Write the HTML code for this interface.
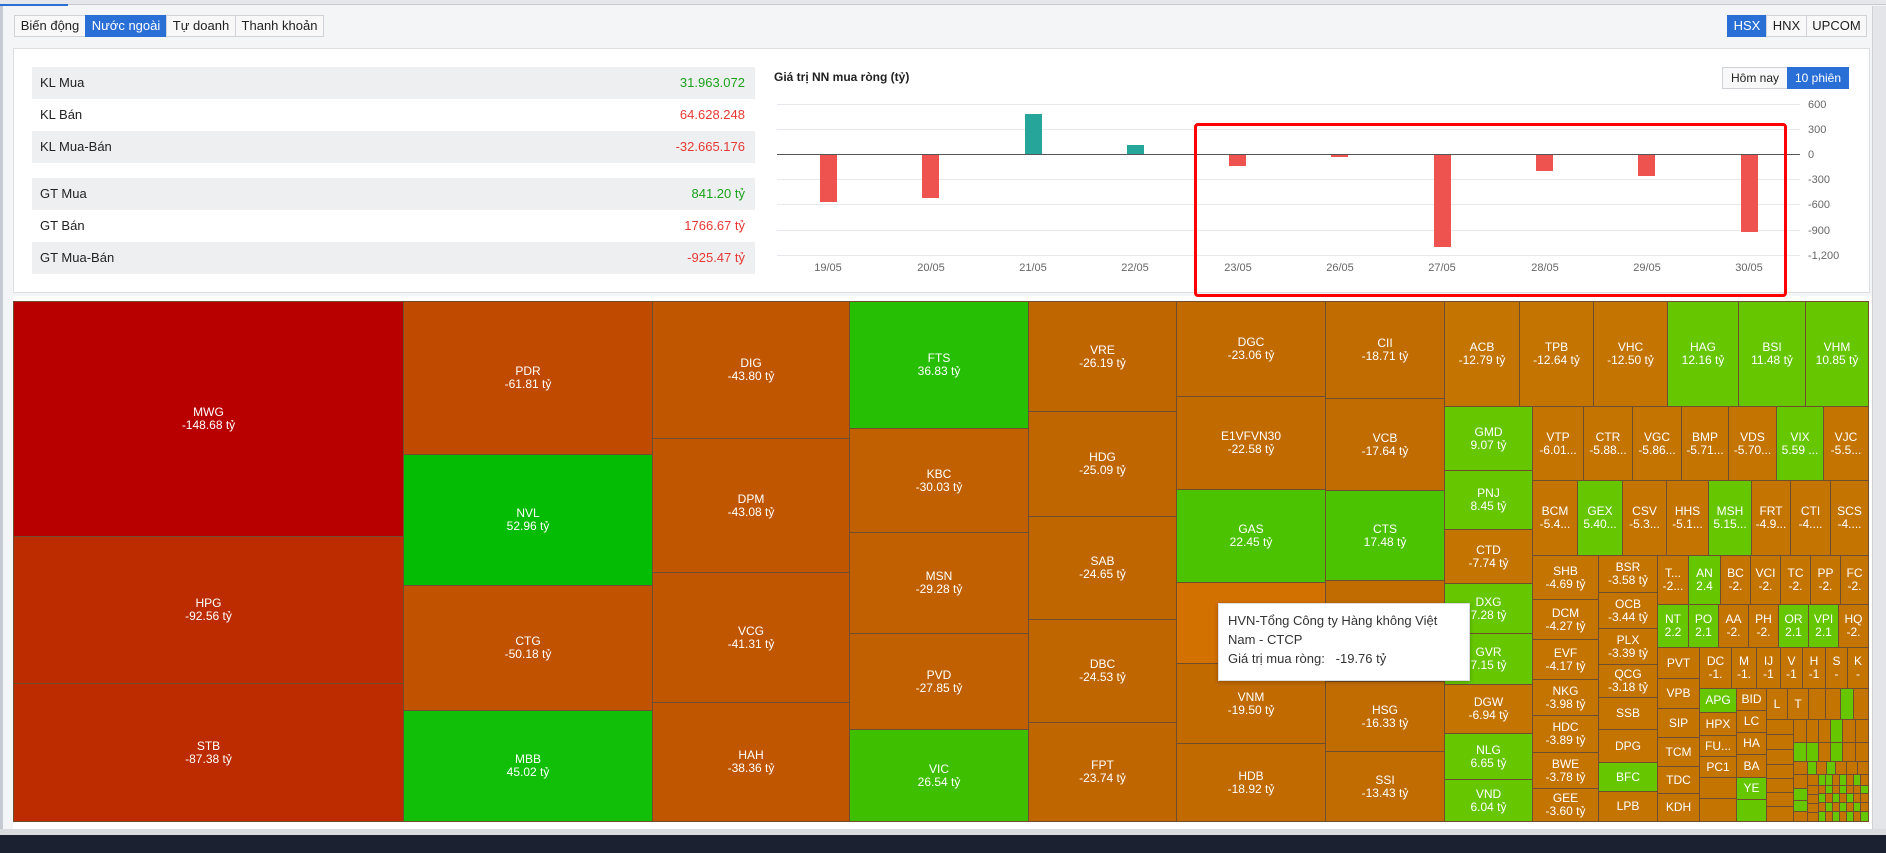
<!DOCTYPE html>
<html><head><meta charset="utf-8"><style>
*{margin:0;padding:0;box-sizing:border-box}
body{width:1886px;height:853px;overflow:hidden;background:#f4f5f7;font-family:"Liberation Sans",sans-serif;position:relative}
.a{position:absolute}
.tab{position:absolute;top:15px;height:22px;border:1px solid #cfd2d6;background:#f8f8f8;font-size:13px;line-height:20px;text-align:center;color:#222}
.on{background:#2a6fd6;color:#fff;border-color:#2a6fd6}
.row{position:absolute;left:32px;width:723px;height:32px;font-size:13px;line-height:32px;color:#222;padding:0 10px 0 8px}
.row b{font-weight:normal;float:right}
.g{color:#1aa31a}.r{color:#e53935}
.gr{background:#eeeff1}
.c{position:absolute;border:1px solid #6e4e2c;color:#fff;font-size:12px;line-height:13px;text-align:center;display:flex;flex-direction:column;justify-content:center;overflow:hidden;white-space:nowrap}
.o{background:#c47400}.gn{background:#66c600}
</style></head><body>
<div class="a" style="left:0;top:0;width:1886px;height:5px;background:#e6e7ea;border-bottom:1px solid #c8cacd"></div>
<div class="a" style="left:0;top:4px;width:68px;height:2px;background:#2a6fd6"></div>
<div class="a" style="left:0;top:6px;width:3px;height:830px;background:#c5cad3"></div>
<div class="a" style="left:1872px;top:6px;width:14px;height:830px;background:#e4e5e8;border-left:1px solid #cfd1d5"></div>

<div class="tab" style="left:14px;width:72px">Biến động</div>
<div class="tab on" style="left:85px;width:82px">Nước ngoài</div>
<div class="tab" style="left:166px;width:70px">Tự doanh</div>
<div class="tab" style="left:235px;width:89px">Thanh khoản</div>
<div class="tab on" style="left:1727px;width:40px">HSX</div>
<div class="tab" style="left:1766px;width:41px">HNX</div>
<div class="tab" style="left:1806px;width:61px">UPCOM</div>

<div class="a" style="left:13px;top:48px;width:1857px;height:245px;background:#fff;border:1px solid #dcdee2"></div>
<div class="row gr" style="top:67px">KL Mua<b class="g">31.963.072</b></div>
<div class="row" style="top:99px">KL Bán<b class="r">64.628.248</b></div>
<div class="row gr" style="top:131px">KL Mua-Bán<b class="r">-32.665.176</b></div>
<div class="row gr" style="top:178px">GT Mua<b class="g">841.20 tỷ</b></div>
<div class="row" style="top:210px">GT Bán<b class="r">1766.67 tỷ</b></div>
<div class="row gr" style="top:242px">GT Mua-Bán<b class="r">-925.47 tỷ</b></div>
<div class="a" style="left:774px;top:70px;font-size:12px;font-weight:bold;color:#222">Giá trị NN mua ròng (tỷ)</div>
<div class="tab" style="left:1722px;top:67px;height:22px;width:66px;font-size:12px">Hôm nay</div>
<div class="tab on" style="left:1787px;top:67px;height:22px;width:62px;font-size:12px">10 phiên</div>

<svg class="a" style="left:0;top:0" width="1886" height="300" font-family="Liberation Sans" font-size="11" fill="#666">
<g stroke="#e6e9ee" stroke-width="1"><line x1="777" y1="104.5" x2="1800" y2="104.5"/><line x1="777" y1="129.5" x2="1800" y2="129.5"/><line x1="777" y1="179.5" x2="1800" y2="179.5"/><line x1="777" y1="204.5" x2="1800" y2="204.5"/><line x1="777" y1="230.5" x2="1800" y2="230.5"/><line x1="777" y1="255.5" x2="1800" y2="255.5"/></g>
<g fill="#ef5350"><rect x="820" y="154" width="17" height="48"/><rect x="922" y="154" width="17" height="44"/><rect x="1229" y="154" width="17" height="12"/><rect x="1331" y="154" width="17" height="3"/><rect x="1434" y="154" width="17" height="93"/><rect x="1536" y="154" width="17" height="17"/><rect x="1638" y="154" width="17" height="22"/><rect x="1741" y="154" width="17" height="78"/></g>
<g fill="#26a69a"><rect x="1025" y="114" width="17" height="40"/><rect x="1127" y="145" width="17" height="9"/></g>
<line x1="777" y1="154.5" x2="1800" y2="154.5" stroke="#555"/>
<g><text x="1808" y="108">600</text><text x="1808" y="133">300</text><text x="1808" y="158">0</text><text x="1808" y="183">-300</text><text x="1808" y="208">-600</text><text x="1808" y="234">-900</text><text x="1808" y="259">-1,200</text></g>
<g text-anchor="middle"><text x="828" y="271">19/05</text><text x="931" y="271">20/05</text><text x="1033" y="271">21/05</text><text x="1135" y="271">22/05</text><text x="1238" y="271">23/05</text><text x="1340" y="271">26/05</text><text x="1442" y="271">27/05</text><text x="1545" y="271">28/05</text><text x="1647" y="271">29/05</text><text x="1749" y="271">30/05</text></g>
</svg>

<div class="a" style="left:13px;top:296px;width:1859px;height:533px;background:#fff"></div>
<div class="a" style="left:0;top:829px;width:1886px;height:6px;background:#d9dbdf"></div>
<div class="a" style="left:0;top:835px;width:1886px;height:18px;background:#1b2130"></div>

<div class="c" style="left:13px;top:301px;width:391px;height:236px;background:#b80000">MWG<br>-148.68 tỷ</div>
<div class="c" style="left:13px;top:536px;width:391px;height:148px;background:#bc2c00">HPG<br>-92.56 tỷ</div>
<div class="c" style="left:13px;top:683px;width:391px;height:139px;background:#bc2c00">STB<br>-87.38 tỷ</div>
<div class="c" style="left:403px;top:301px;width:250px;height:154px;background:#c04a00">PDR<br>-61.81 tỷ</div>
<div class="c" style="left:403px;top:454px;width:250px;height:132px;background:#04bc04">NVL<br>52.96 tỷ</div>
<div class="c" style="left:403px;top:585px;width:250px;height:126px;background:#c05200">CTG<br>-50.18 tỷ</div>
<div class="c" style="left:403px;top:710px;width:250px;height:112px;background:#12bf08">MBB<br>45.02 tỷ</div>
<div class="c" style="left:652px;top:301px;width:198px;height:138px;background:#c05600">DIG<br>-43.80 tỷ</div>
<div class="c" style="left:652px;top:438px;width:198px;height:135px;background:#c05600">DPM<br>-43.08 tỷ</div>
<div class="c" style="left:652px;top:572px;width:198px;height:131px;background:#c05600">VCG<br>-41.31 tỷ</div>
<div class="c" style="left:652px;top:702px;width:198px;height:120px;background:#c05600">HAH<br>-38.36 tỷ</div>
<div class="c" style="left:849px;top:301px;width:180px;height:128px;background:#27bf04">FTS<br>36.83 tỷ</div>
<div class="c" style="left:849px;top:428px;width:180px;height:105px;background:#c06000">KBC<br>-30.03 tỷ</div>
<div class="c" style="left:849px;top:532px;width:180px;height:102px;background:#c06000">MSN<br>-29.28 tỷ</div>
<div class="c" style="left:849px;top:633px;width:180px;height:97px;background:#c06000">PVD<br>-27.85 tỷ</div>
<div class="c" style="left:849px;top:729px;width:180px;height:93px;background:#3ec000">VIC<br>26.54 tỷ</div>
<div class="c" style="left:1028px;top:301px;width:149px;height:111px;background:#c06600">VRE<br>-26.19 tỷ</div>
<div class="c" style="left:1028px;top:411px;width:149px;height:106px;background:#c06600">HDG<br>-25.09 tỷ</div>
<div class="c" style="left:1028px;top:516px;width:149px;height:104px;background:#c06600">SAB<br>-24.65 tỷ</div>
<div class="c" style="left:1028px;top:619px;width:149px;height:104px;background:#c06600">DBC<br>-24.53 tỷ</div>
<div class="c" style="left:1028px;top:722px;width:149px;height:100px;background:#c06600">FPT<br>-23.74 tỷ</div>
<div class="c" style="left:1176px;top:301px;width:150px;height:96px;background:#c06a00">DGC<br>-23.06 tỷ</div>
<div class="c" style="left:1176px;top:396px;width:150px;height:94px;background:#c06a00">E1VFVN30<br>-22.58 tỷ</div>
<div class="c" style="left:1176px;top:489px;width:150px;height:94px;background:#4cc300">GAS<br>22.45 tỷ</div>
<div class="c" style="left:1176px;top:582px;width:150px;height:82px;background:#d27000"></div>
<div class="c" style="left:1176px;top:663px;width:150px;height:81px;background:#c06a00">VNM<br>-19.50 tỷ</div>
<div class="c" style="left:1176px;top:743px;width:150px;height:79px;background:#c06a00">HDB<br>-18.92 tỷ</div>
<div class="c" style="left:1325px;top:301px;width:120px;height:98px;background:#c06c00">CII<br>-18.71 tỷ</div>
<div class="c" style="left:1325px;top:398px;width:120px;height:93px;background:#c06c00">VCB<br>-17.64 tỷ</div>
<div class="c" style="left:1325px;top:490px;width:120px;height:91px;background:#4cc300">CTS<br>17.48 tỷ</div>
<div class="c" style="left:1325px;top:580px;width:120px;height:102px;background:#c06c00"></div>
<div class="c" style="left:1325px;top:681px;width:120px;height:71px;background:#c06c00">HSG<br>-16.33 tỷ</div>
<div class="c" style="left:1325px;top:751px;width:120px;height:71px;background:#c06c00">SSI<br>-13.43 tỷ</div>

<div class="c o" style="left:1444px;top:301px;width:76px;height:106px">ACB<br>-12.79 tỷ</div>
<div class="c o" style="left:1519px;top:301px;width:75px;height:106px">TPB<br>-12.64 tỷ</div>
<div class="c o" style="left:1593px;top:301px;width:75px;height:106px">VHC<br>-12.50 tỷ</div>
<div class="c gn" style="left:1667px;top:301px;width:72px;height:106px">HAG<br>12.16 tỷ</div>
<div class="c gn" style="left:1738px;top:301px;width:68px;height:106px">BSI<br>11.48 tỷ</div>
<div class="c gn" style="left:1805px;top:301px;width:64px;height:106px">VHM<br>10.85 tỷ</div>
<div class="c gn" style="left:1444px;top:406px;width:89px;height:65px">GMD<br>9.07 tỷ</div>
<div class="c gn" style="left:1444px;top:470px;width:89px;height:60px">PNJ<br>8.45 tỷ</div>
<div class="c o" style="left:1444px;top:529px;width:89px;height:55px">CTD<br>-7.74 tỷ</div>
<div class="c gn" style="left:1444px;top:583px;width:89px;height:51px">DXG<br>7.28 tỷ</div>
<div class="c gn" style="left:1444px;top:633px;width:89px;height:52px">GVR<br>7.15 tỷ</div>
<div class="c o" style="left:1444px;top:684px;width:89px;height:50px">DGW<br>-6.94 tỷ</div>
<div class="c gn" style="left:1444px;top:733px;width:89px;height:47px">NLG<br>6.65 tỷ</div>
<div class="c gn" style="left:1444px;top:779px;width:89px;height:43px">VND<br>6.04 tỷ</div>
<div class="c o" style="left:1532px;top:406px;width:52px;height:75px">VTP<br>-6.01...</div>
<div class="c o" style="left:1583px;top:406px;width:50px;height:75px">CTR<br>-5.88...</div>
<div class="c o" style="left:1632px;top:406px;width:50px;height:75px">VGC<br>-5.86...</div>
<div class="c o" style="left:1681px;top:406px;width:48px;height:75px">BMP<br>-5.71...</div>
<div class="c o" style="left:1728px;top:406px;width:49px;height:75px">VDS<br>-5.70...</div>
<div class="c gn" style="left:1776px;top:406px;width:48px;height:75px">VIX<br>5.59 ...</div>
<div class="c o" style="left:1823px;top:406px;width:46px;height:75px">VJC<br>-5.5...</div>
<div class="c o" style="left:1532px;top:480px;width:46px;height:76px">BCM<br>-5.4...</div>
<div class="c gn" style="left:1577px;top:480px;width:46px;height:76px">GEX<br>5.40...</div>
<div class="c o" style="left:1622px;top:480px;width:45px;height:76px">CSV<br>-5.3...</div>
<div class="c o" style="left:1666px;top:480px;width:43px;height:76px">HHS<br>-5.1...</div>
<div class="c gn" style="left:1708px;top:480px;width:44px;height:76px">MSH<br>5.15...</div>
<div class="c o" style="left:1751px;top:480px;width:40px;height:76px">FRT<br>-4.9...</div>
<div class="c o" style="left:1790px;top:480px;width:41px;height:76px">CTI<br>-4....</div>
<div class="c o" style="left:1830px;top:480px;width:39px;height:76px">SCS<br>-4....</div>
<div class="c o" style="left:1532px;top:555px;width:67px;height:45px">SHB<br>-4.69 tỷ</div>
<div class="c o" style="left:1532px;top:599px;width:67px;height:41px">DCM<br>-4.27 tỷ</div>
<div class="c o" style="left:1532px;top:639px;width:67px;height:41px">EVF<br>-4.17 tỷ</div>
<div class="c o" style="left:1532px;top:679px;width:67px;height:37px">NKG<br>-3.98 tỷ</div>
<div class="c o" style="left:1532px;top:715px;width:67px;height:38px">HDC<br>-3.89 tỷ</div>
<div class="c o" style="left:1532px;top:752px;width:67px;height:37px">BWE<br>-3.78 tỷ</div>
<div class="c o" style="left:1532px;top:788px;width:67px;height:34px">GEE<br>-3.60 tỷ</div>
<div class="c o" style="left:1598px;top:555px;width:60px;height:38px">BSR<br>-3.58 tỷ</div>
<div class="c o" style="left:1598px;top:592px;width:60px;height:37px">OCB<br>-3.44 tỷ</div>
<div class="c o" style="left:1598px;top:628px;width:60px;height:37px">PLX<br>-3.39 tỷ</div>
<div class="c o" style="left:1598px;top:664px;width:60px;height:34px">QCG<br>-3.18 tỷ</div>
<div class="c o" style="left:1598px;top:697px;width:60px;height:33px">SSB</div>
<div class="c o" style="left:1598px;top:729px;width:60px;height:34px">DPG</div>
<div class="c gn" style="left:1598px;top:762px;width:60px;height:30px">BFC</div>
<div class="c o" style="left:1598px;top:791px;width:60px;height:31px">LPB</div>
<div class="c o" style="left:1657px;top:555px;width:32px;height:50px">T...<br>-2...</div>
<div class="c gn" style="left:1688px;top:555px;width:33px;height:50px">AN<br>2.4</div>
<div class="c o" style="left:1720px;top:555px;width:31px;height:50px">BC<br>-2.</div>
<div class="c o" style="left:1750px;top:555px;width:31px;height:50px">VCI<br>-2.</div>
<div class="c o" style="left:1780px;top:555px;width:31px;height:50px">TC<br>-2.</div>
<div class="c o" style="left:1810px;top:555px;width:31px;height:50px">PP<br>-2.</div>
<div class="c o" style="left:1840px;top:555px;width:29px;height:50px">FC<br>-2.</div>
<div class="c gn" style="left:1657px;top:604px;width:32px;height:44px">NT<br>2.2</div>
<div class="c gn" style="left:1688px;top:604px;width:31px;height:44px">PO<br>2.1</div>
<div class="c o" style="left:1718px;top:604px;width:31px;height:44px">AA<br>-2.</div>
<div class="c o" style="left:1748px;top:604px;width:31px;height:44px">PH<br>-2.</div>
<div class="c gn" style="left:1778px;top:604px;width:31px;height:44px">OR<br>2.1</div>
<div class="c gn" style="left:1808px;top:604px;width:31px;height:44px">VPI<br>2.1</div>
<div class="c o" style="left:1838px;top:604px;width:31px;height:44px">HQ<br>-2.</div>
<div class="c o" style="left:1657px;top:647px;width:43px;height:32px">PVT</div>
<div class="c o" style="left:1657px;top:678px;width:43px;height:31px">VPB</div>
<div class="c o" style="left:1657px;top:708px;width:43px;height:30px">SIP</div>
<div class="c o" style="left:1657px;top:737px;width:43px;height:30px">TCM</div>
<div class="c o" style="left:1657px;top:766px;width:43px;height:28px">TDC</div>
<div class="c o" style="left:1657px;top:793px;width:43px;height:29px">KDH</div>
<div class="c o" style="left:1699px;top:647px;width:33px;height:42px">DC<br>-1.</div>
<div class="c o" style="left:1731px;top:647px;width:26px;height:42px">M<br>-1.</div>
<div class="c o" style="left:1756px;top:647px;width:25px;height:42px">IJ<br>-1</div>
<div class="c o" style="left:1780px;top:647px;width:23px;height:42px">V<br>-1</div>
<div class="c o" style="left:1802px;top:647px;width:24px;height:42px">H<br>-1</div>
<div class="c o" style="left:1825px;top:647px;width:23px;height:42px">S<br>-</div>
<div class="c o" style="left:1847px;top:647px;width:22px;height:42px">K<br>-</div>
<div class="c gn" style="left:1699px;top:688px;width:38px;height:25px">APG</div>
<div class="c o" style="left:1699px;top:712px;width:38px;height:24px">HPX</div>
<div class="c o" style="left:1699px;top:735px;width:38px;height:22px">FU...</div>
<div class="c o" style="left:1699px;top:756px;width:38px;height:22px">PC1</div>
<div class="c o" style="left:1699px;top:777px;width:38px;height:22px"></div>
<div class="c o" style="left:1699px;top:798px;width:38px;height:24px"></div>
<div class="c o" style="left:1736px;top:688px;width:31px;height:23px">BID</div>
<div class="c o" style="left:1736px;top:710px;width:31px;height:23px">LC</div>
<div class="c o" style="left:1736px;top:732px;width:31px;height:23px">HA</div>
<div class="c o" style="left:1736px;top:754px;width:31px;height:24px">BA</div>
<div class="c gn" style="left:1736px;top:777px;width:31px;height:23px">YE</div>
<div class="c gn" style="left:1736px;top:799px;width:31px;height:23px"></div>
<div class="c o" style="left:1766px;top:688px;width:22px;height:32px">L</div>
<div class="c o" style="left:1787px;top:688px;width:22px;height:32px">T</div>
<div class="c o" style="left:1808px;top:688px;width:18px;height:32px"></div>
<div class="c o" style="left:1825px;top:688px;width:16px;height:32px"></div>
<div class="c gn" style="left:1840px;top:688px;width:14px;height:32px"></div>
<div class="c o" style="left:1853px;top:688px;width:16px;height:32px"></div>
<div class="c o" style="left:1766px;top:719px;width:28px;height:16px"></div>
<div class="c o" style="left:1766px;top:734px;width:28px;height:16px"></div>
<div class="c o" style="left:1766px;top:749px;width:28px;height:16px"></div>
<div class="c o" style="left:1766px;top:764px;width:28px;height:15px"></div>
<div class="c o" style="left:1766px;top:778px;width:28px;height:15px"></div>
<div class="c o" style="left:1766px;top:792px;width:28px;height:15px"></div>
<div class="c o" style="left:1766px;top:806px;width:28px;height:16px"></div>
<div class="c o" style="left:1793px;top:719px;width:14px;height:24px"></div>
<div class="c o" style="left:1806px;top:719px;width:13px;height:24px"></div>
<div class="c o" style="left:1818px;top:719px;width:13px;height:24px"></div>
<div class="c gn" style="left:1830px;top:719px;width:13px;height:24px"></div>
<div class="c o" style="left:1842px;top:719px;width:14px;height:24px"></div>
<div class="c o" style="left:1855px;top:719px;width:14px;height:24px"></div>
<div class="c gn" style="left:1793px;top:742px;width:14px;height:20px"></div>
<div class="c gn" style="left:1806px;top:742px;width:13px;height:20px"></div>
<div class="c o" style="left:1818px;top:742px;width:13px;height:20px"></div>
<div class="c gn" style="left:1830px;top:742px;width:13px;height:20px"></div>
<div class="c o" style="left:1842px;top:742px;width:14px;height:20px"></div>
<div class="c o" style="left:1855px;top:742px;width:14px;height:20px"></div>
<div class="c o" style="left:1793px;top:761px;width:15px;height:14px"></div>
<div class="c gn" style="left:1807px;top:761px;width:10px;height:14px"></div>
<div class="c o" style="left:1816px;top:761px;width:11px;height:14px"></div>
<div class="c gn" style="left:1826px;top:761px;width:10px;height:14px"></div>
<div class="c o" style="left:1835px;top:761px;width:12px;height:14px"></div>
<div class="c o" style="left:1846px;top:761px;width:12px;height:14px"></div>
<div class="c o" style="left:1857px;top:761px;width:12px;height:14px"></div>
<div class="c o" style="left:1793px;top:774px;width:15px;height:15px"></div>
<div class="c gn" style="left:1793px;top:788px;width:15px;height:13px"></div>
<div class="c gn" style="left:1793px;top:800px;width:15px;height:12px"></div>
<div class="c o" style="left:1793px;top:811px;width:15px;height:11px"></div>
<div class="c o" style="left:1807px;top:774px;width:12px;height:12px"></div>
<div class="c gn" style="left:1818px;top:774px;width:8px;height:12px"></div>
<div class="c gn" style="left:1825px;top:774px;width:8px;height:12px"></div>
<div class="c o" style="left:1832px;top:774px;width:8px;height:12px"></div>
<div class="c gn" style="left:1839px;top:774px;width:8px;height:12px"></div>
<div class="c o" style="left:1846px;top:774px;width:8px;height:12px"></div>
<div class="c gn" style="left:1853px;top:774px;width:8px;height:12px"></div>
<div class="c o" style="left:1860px;top:774px;width:9px;height:12px"></div>
<div class="c o" style="left:1807px;top:785px;width:12px;height:10px"></div>
<div class="c o" style="left:1807px;top:794px;width:12px;height:10px"></div>
<div class="c o" style="left:1807px;top:803px;width:12px;height:10px"></div>
<div class="c o" style="left:1807px;top:812px;width:12px;height:10px"></div>
<div class="c o" style="left:1818px;top:785px;width:8px;height:9px"></div>
<div class="c gn" style="left:1825px;top:785px;width:8px;height:9px"></div>
<div class="c o" style="left:1832px;top:785px;width:8px;height:9px"></div>
<div class="c gn" style="left:1839px;top:785px;width:8px;height:9px"></div>
<div class="c o" style="left:1846px;top:785px;width:8px;height:9px"></div>
<div class="c o" style="left:1853px;top:785px;width:8px;height:9px"></div>
<div class="c gn" style="left:1860px;top:785px;width:9px;height:9px"></div>
<div class="c gn" style="left:1818px;top:793px;width:8px;height:10px"></div>
<div class="c o" style="left:1825px;top:793px;width:8px;height:10px"></div>
<div class="c gn" style="left:1832px;top:793px;width:8px;height:10px"></div>
<div class="c o" style="left:1839px;top:793px;width:8px;height:10px"></div>
<div class="c gn" style="left:1846px;top:793px;width:8px;height:10px"></div>
<div class="c o" style="left:1853px;top:793px;width:8px;height:10px"></div>
<div class="c o" style="left:1860px;top:793px;width:9px;height:10px"></div>
<div class="c o" style="left:1818px;top:802px;width:8px;height:10px"></div>
<div class="c gn" style="left:1825px;top:802px;width:8px;height:10px"></div>
<div class="c o" style="left:1832px;top:802px;width:8px;height:10px"></div>
<div class="c gn" style="left:1839px;top:802px;width:8px;height:10px"></div>
<div class="c o" style="left:1846px;top:802px;width:8px;height:10px"></div>
<div class="c gn" style="left:1853px;top:802px;width:8px;height:10px"></div>
<div class="c o" style="left:1860px;top:802px;width:9px;height:10px"></div>
<div class="c gn" style="left:1818px;top:811px;width:8px;height:11px"></div>
<div class="c o" style="left:1825px;top:811px;width:8px;height:11px"></div>
<div class="c gn" style="left:1832px;top:811px;width:8px;height:11px"></div>
<div class="c o" style="left:1839px;top:811px;width:8px;height:11px"></div>
<div class="c gn" style="left:1846px;top:811px;width:8px;height:11px"></div>
<div class="c o" style="left:1853px;top:811px;width:8px;height:11px"></div>
<div class="c gn" style="left:1860px;top:811px;width:9px;height:11px"></div>

<div class="a" style="left:1218px;top:603px;width:252px;height:78px;background:#fff;border:1px solid #ddd;box-shadow:0 1px 4px rgba(0,0,0,.25);font-size:13px;color:#333;line-height:19px;padding:7px 9px">HVN-Tổng Công ty Hàng không Việt<br>Nam - CTCP<br>Giá trị mua ròng:&nbsp;&nbsp; -19.76 tỷ</div>

<div class="a" style="left:1194px;top:123px;width:593px;height:174px;border:3px solid #f00;border-radius:4px"></div>
</body></html>
